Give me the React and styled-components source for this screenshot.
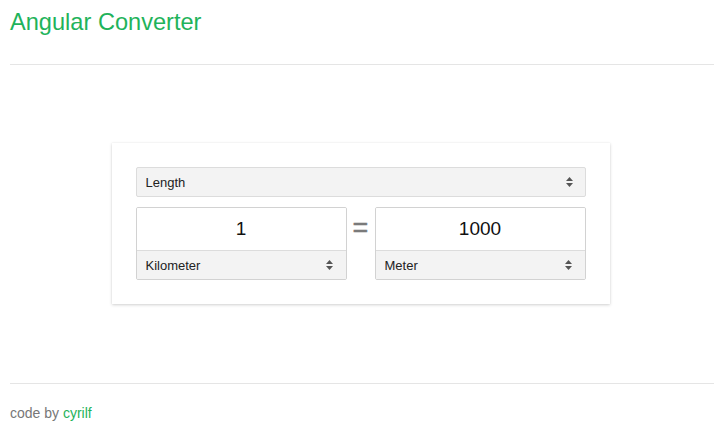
import { useState } from 'react';
import styled, { createGlobalStyle } from 'styled-components';

const GlobalStyle = createGlobalStyle`
  body {
    margin: 0;
    background: #fff;
    font-family: "Liberation Sans", Arial, sans-serif;
    color: #333;
  }
`;

const green = '#1fb35b';

const Page = styled.div`
  padding: 0 10px;
`;

const Header = styled.header`
  height: 64px;
  box-sizing: border-box;
  padding-top: 8px;
`;

const Title = styled.h1`
  margin: 0;
  font-size: 23.6px;
  font-weight: 400;
  line-height: 28px;
  color: ${green};
`;

const Main = styled.main`
  border-top: 1px solid #e5e5e5;
  border-bottom: 1px solid #e5e5e5;
  padding: 78px 3px 79px 0;
  display: flex;
  justify-content: center;
`;

const Card = styled.section`
  width: 498px;
  box-sizing: border-box;
  padding: 24px;
  background: #fff;
  box-shadow: 0 1px 3px rgba(0, 0, 0, 0.18), 0 0 1px rgba(0, 0, 0, 0.08);
  display: flex;
  flex-direction: column;
  gap: 10px;
`;

const SelectWrap = styled.div`
  position: relative;
  height: ${(p) => p.$height}px;
`;

const Select = styled.select`
  appearance: none;
  width: 100%;
  height: 100%;
  margin: 0;
  padding: 0 24px 0 9px;
  box-sizing: border-box;
  font-family: "Liberation Sans", Arial, sans-serif;
  font-size: 13px;
  color: #222;
  background: #f3f3f3;
  border: ${(p) => (p.$flat ? '0' : '1px solid #dcdcdc')};
  border-top: 1px solid #dcdcdc;
  border-radius: ${(p) => (p.$flat ? '0' : '2px')};
  outline: none;
`;

const Arrows = styled.svg`
  position: absolute;
  right: 13px;
  top: 50%;
  transform: translateY(-50%);
  pointer-events: none;
`;

const Row = styled.div`
  display: grid;
  grid-template-columns: 1fr 28px 1fr;
`;

const UnitBox = styled.div`
  border: 1px solid #d2d2d2;
  border-radius: 2px;
  overflow: hidden;
  display: flex;
  flex-direction: column;
`;

const NumberInput = styled.input`
  height: 42px;
  margin: 0;
  padding: 0 8px;
  box-sizing: border-box;
  border: 0;
  outline: none;
  text-align: center;
  font-family: "Liberation Sans", Arial, sans-serif;
  font-size: 19px;
  color: #111;
  background: #fff;
`;

const Equals = styled.div`
  height: 43px;
  display: flex;
  align-items: center;
  justify-content: center;
  font-size: 27px;
  color: #7a7a7a;
  -webkit-text-stroke: 0.4px #7a7a7a;
`;

const Footer = styled.footer`
  padding-top: 21px;
  font-size: 14px;
  color: #777;
`;

const Link = styled.a`
  color: ${green};
  text-decoration: none;
`;

function SelectArrows() {
  return (
    <Arrows width="7" height="10" viewBox="0 0 7 10">
      <path d="M0 4 L3.5 0 L7 4 Z M0 6 L7 6 L3.5 10 Z" fill="#555" />
    </Arrows>
  );
}

function UnitSelect({ value, options, flat, height }) {
  return (
    <SelectWrap $height={height}>
      <Select $flat={flat} defaultValue={value}>
        {options.map((o) => (
          <option key={o}>{o}</option>
        ))}
      </Select>
      <SelectArrows />
    </SelectWrap>
  );
}

const units = ['Kilometer', 'Meter', 'Centimeter', 'Millimeter', 'Mile', 'Yard', 'Foot', 'Inch'];

export default function App() {
  const [from, setFrom] = useState('1');

  return (
    <>
      <GlobalStyle />
      <Page>
        <Header>
          <Title>Angular Converter</Title>
        </Header>
        <Main>
          <Card>
            <UnitSelect value="Length" options={['Length', 'Mass', 'Temperature', 'Time']} height={30} />
            <Row>
              <UnitBox>
                <NumberInput value={from} onChange={(e) => setFrom(e.target.value)} />
                <UnitSelect value="Kilometer" options={units} flat height={29} />
              </UnitBox>
              <Equals>=</Equals>
              <UnitBox>
                <NumberInput value={String(Number(from) * 1000)} readOnly />
                <UnitSelect value="Meter" options={units} flat height={29} />
              </UnitBox>
            </Row>
          </Card>
        </Main>
        <Footer>
          code by <Link href="#">cyrilf</Link>
        </Footer>
      </Page>
    </>
  );
}
